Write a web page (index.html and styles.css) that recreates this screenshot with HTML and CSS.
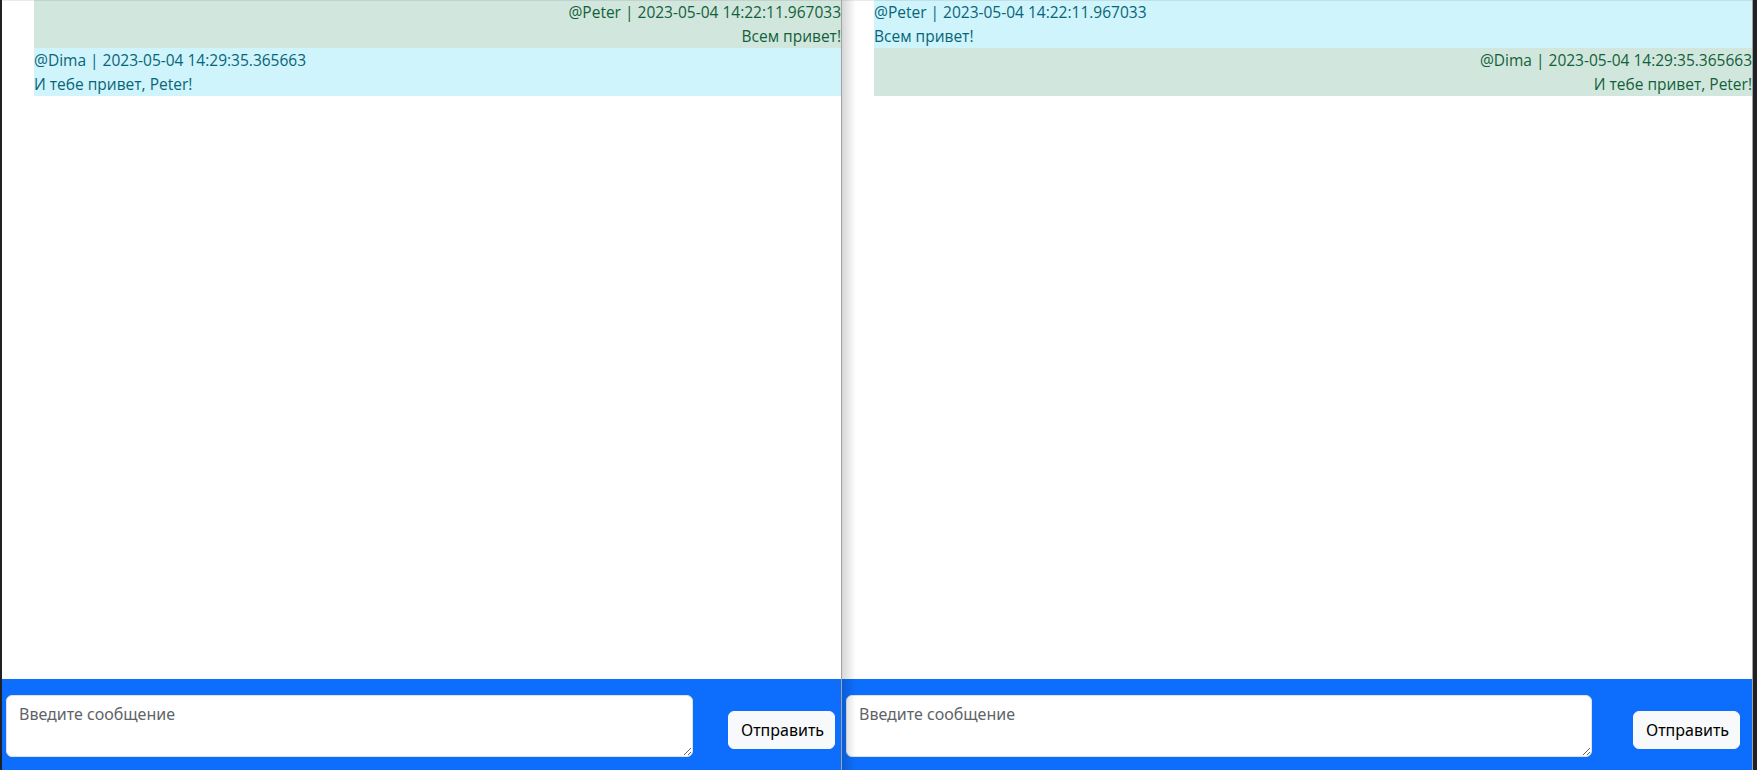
FILE: index.html
```html
<!DOCTYPE html>
<html lang="ru">
<head>
<meta charset="utf-8">
<title>Chat</title>
<link rel="stylesheet" href="styles.css">
</head>
<body>
<div class="screen">
  <div class="edge edge-left"></div>

  <section class="win win-left">
    <div class="chat">
      <div class="msg msg-own">
        <div>@Peter | 2023-05-04 14:22:11.967033</div>
        <div>Всем привет!</div>
      </div>
      <div class="msg msg-other">
        <div>@Dima | 2023-05-04 14:29:35.365663</div>
        <div>И тебе привет, Peter!</div>
      </div>
    </div>
    <form class="composer">
      <textarea class="composer-input" placeholder="Введите сообщение"></textarea>
      <button type="button" class="composer-btn composer-btn-left">Отправить</button>
    </form>
  </section>

  <div class="divider"></div>

  <section class="win win-right">
    <div class="chat">
      <div class="msg msg-other">
        <div>@Peter | 2023-05-04 14:22:11.967033</div>
        <div>Всем привет!</div>
      </div>
      <div class="msg msg-own">
        <div>@Dima | 2023-05-04 14:29:35.365663</div>
        <div>И тебе привет, Peter!</div>
      </div>
    </div>
    <form class="composer">
      <textarea class="composer-input" placeholder="Введите сообщение"></textarea>
      <button type="button" class="composer-btn composer-btn-right">Отправить</button>
    </form>
  </section>

  <div class="divider"></div>
  <div class="edge edge-right"></div>
</div>
</body>
</html>
```

FILE: styles.css
```css
* { box-sizing: border-box; }

html, body {
  margin: 0;
  padding: 0;
  height: 770px;
  overflow: hidden;
  background: #ffffff;
}

.screen {
  display: flex;
  height: 770px;
  font-family: "Open Sans", "Noto Sans", sans-serif;
  font-size: 15.5px;
  line-height: 24px;
}

.edge {
  background: #1f2125;
}
.edge-left { width: 2px; flex: 0 0 2px; }
.edge-right { flex: 1 1 auto; }

.divider {
  flex: 0 0 1px;
  background: #a3a3a3;
}

.win {
  position: relative;
  display: flex;
  flex-direction: column;
  background: #ffffff;
  height: 770px;
}
.win-left { flex: 0 0 839px; }
.win-right { flex: 0 0 910px; }

.win::before {
  content: "";
  position: absolute;
  left: 0;
  right: 0;
  top: 0;
  height: 1px;
  background: rgba(0, 0, 0, 0.08);
  pointer-events: none;
}

.win-right::after {
  content: "";
  position: absolute;
  left: 0;
  top: 0;
  bottom: 0;
  width: 14px;
  background: linear-gradient(to right, rgba(0, 0, 0, 0.16), rgba(0, 0, 0, 0));
  pointer-events: none;
}

.chat {
  flex: 1 1 auto;
  padding-left: 32px;
}

.msg {
  padding: 0;
}
.msg-own {
  background: #d1e7dd;
  color: #135f3b;
  text-align: right;
}
.msg-other {
  background: #cff4fc;
  color: #086577;
  text-align: left;
}

.composer {
  flex: 0 0 91px;
  height: 91px;
  margin: 0;
  background: #0d6efd;
  display: flex;
  align-items: flex-start;
  padding-left: 4px;
}

.composer-input {
  width: 82.3%;
  height: 62px;
  margin-top: 16px;
  padding: 6px 12px;
  border: 1px solid #dee2e6;
  border-radius: 6px;
  background: #ffffff;
  font-family: "Noto Sans", "Open Sans", sans-serif;
  font-size: 16px;
  line-height: 24px;
  color: #212529;
  resize: vertical;
}
.composer-input::placeholder {
  color: #5f6468;
  opacity: 1;
}

.composer-btn {
  margin-left: auto;
  margin-top: 32px;
  height: 38px;
  width: 107px;
  padding: 6px 12px;
  border: 1px solid #f8f9fa;
  border-radius: 6px;
  background: #f8f9fa;
  color: #000000;
  font-family: "Noto Sans", "Open Sans", sans-serif;
  font-size: 16px;
  line-height: 24px;
}
.composer-btn-left { margin-right: 6px; }
.composer-btn-right { margin-right: 12px; }
```
